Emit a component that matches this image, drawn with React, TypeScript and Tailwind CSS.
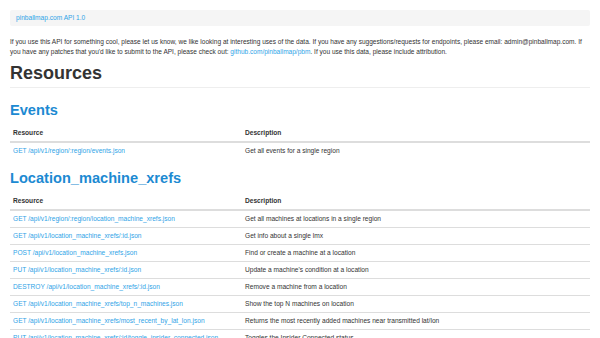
import React from 'react';

interface Endpoint {
    resource: string;
    description: string;
}

const events: Endpoint[] = [
    { resource: 'GET /api/v1/region/:region/events.json', description: 'Get all events for a single region' },
];

const lmx: Endpoint[] = [
    { resource: 'GET /api/v1/region/:region/location_machine_xrefs.json', description: 'Get all machines at locations in a single region' },
    { resource: 'GET /api/v1/location_machine_xrefs/:id.json', description: 'Get info about a single lmx' },
    { resource: 'POST /api/v1/location_machine_xrefs.json', description: 'Find or create a machine at a location' },
    { resource: 'PUT /api/v1/location_machine_xrefs/:id.json', description: "Update a machine's condition at a location" },
    { resource: 'DESTROY /api/v1/location_machine_xrefs/:id.json', description: 'Remove a machine from a location' },
    { resource: 'GET /api/v1/location_machine_xrefs/top_n_machines.json', description: 'Show the top N machines on location' },
    { resource: 'GET /api/v1/location_machine_xrefs/most_recent_by_lat_lon.json', description: 'Returns the most recently added machines near transmitted lat/lon' },
    { resource: 'PUT /api/v1/location_machine_xrefs/:id/toggle_insider_connected.json', description: 'Toggles the Insider Connected status' },
];

const ResourceTable = ({ rows }: { rows: Endpoint[] }) => (
    <table className="w-full border-collapse text-[6.6px] leading-[8px]">
        <thead>
            <tr>
                <th className="w-[232px] px-[3px] py-[4px] text-left font-bold border-b-2 border-[#ddd]">Resource</th>
                <th className="px-[3px] py-[4px] text-left font-bold border-b-2 border-[#ddd]">Description</th>
            </tr>
        </thead>
        <tbody>
            {rows.map((row, i) => (
                <tr key={row.resource}>
                    <td className={`px-[3px] py-[4px] whitespace-nowrap ${i > 0 ? 'border-t border-[#ddd]' : ''}`}>
                        <a href="#" className="text-[#2fa4e7]">{row.resource}</a>
                    </td>
                    <td className={`px-[3px] py-[4px] whitespace-nowrap ${i > 0 ? 'border-t border-[#ddd]' : ''}`}>{row.description}</td>
                </tr>
            ))}
        </tbody>
    </table>
);

const App = () => {
    return (
        <div className="px-[10px] pt-[10px] text-[#333] bg-white font-['Liberation_Sans',Arial,sans-serif]">
            <div className="h-[16px] px-[6px] flex items-center bg-[#f5f5f5] rounded-[2px] text-[6.6px]">
                <a href="#" className="text-[#2fa4e7]">pinballmap.com API 1.0</a>
            </div>
            <p className="mt-[11px] text-[6.55px] leading-[10px]">
                If you use this API for something cool, please let us know, we like looking at interesting uses of the data. If you have any suggestions/requests for endpoints, please email: admin@pinballmap.com. If
                <br />
                you have any patches that you'd like to submit to the API, please check out:{' '}
                <a href="#" className="text-[#2fa4e7]">github.com/pinballmap/pbm</a>. If you use this data, please include attribution.
            </p>
            <h1 className="mt-[6px] pb-[4px] border-b border-[#eee] text-[18px] leading-[20px] font-bold">Resources</h1>
            <h2 className="mt-[14px] text-[14.6px] leading-[17px] font-bold text-[#1c8ad2]">Events</h2>
            <div className="mt-[6px]">
                <ResourceTable rows={events} />
            </div>
            <h2 className="mt-[11px] text-[14.6px] leading-[17px] font-bold text-[#1c8ad2]">Location_machine_xrefs</h2>
            <div className="mt-[6px]">
                <ResourceTable rows={lmx} />
            </div>
        </div>
    );
};

export default App;
